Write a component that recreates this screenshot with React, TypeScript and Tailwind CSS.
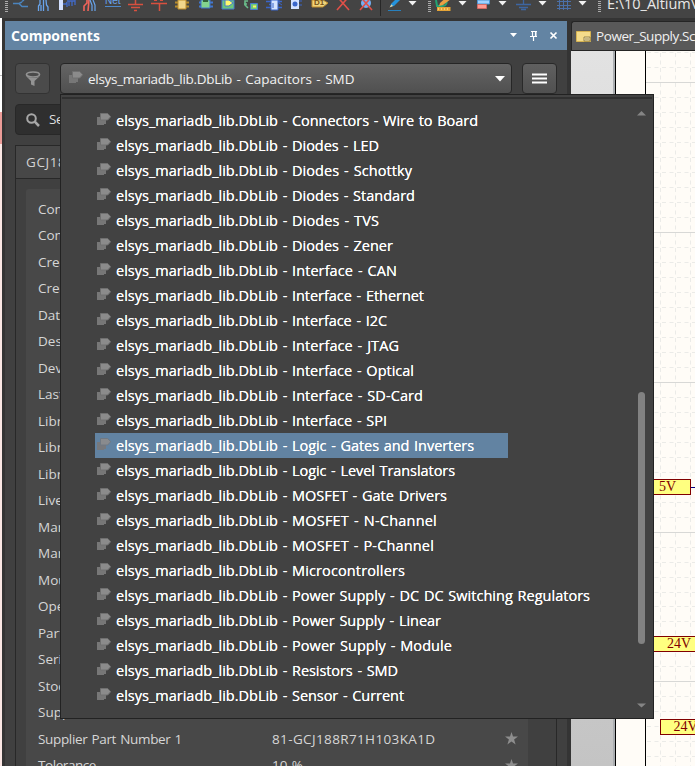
import { useLayoutEffect, useRef } from "react";

const UI = "font-['Open_Sans','Noto_Sans',sans-serif]";

/** Single line of text whose tracking is adjusted so that it spans `width` pixels. */
function Fit({ text, width, className = "" }: { text: string; width: number; className?: string }) {
  const ref = useRef<HTMLSpanElement>(null);
  useLayoutEffect(() => {
    const el = ref.current;
    if (!el) return;
    const fit = () => {
      el.style.letterSpacing = "0px";
      const natural = el.getBoundingClientRect().width;
      el.style.letterSpacing = `${(width - natural) / text.length}px`;
    };
    fit();
    document.fonts.ready.then(fit);
  }, [text, width]);
  return (
    <span ref={ref} className={`inline-block shrink-0 whitespace-pre [word-spacing:1px] ${className}`}>
      {text}
    </span>
  );
}

const libraries: [string, number][] = [
  ["Connectors - Wire to Board", 478],
  ["Diodes - LED", 379],
  ["Diodes - Schottky", 412],
  ["Diodes - Standard", 415],
  ["Diodes - TVS", 379],
  ["Diodes - Zener", 393],
  ["Interface - CAN", 397],
  ["Interface - Ethernet", 424],
  ["Interface - I2C", 387],
  ["Interface - JTAG", 399],
  ["Interface - Optical", 414],
  ["Interface - SD-Card", 423],
  ["Interface - SPI", 387],
  ["Logic - Gates and Inverters", 474],
  ["Logic - Level Translators", 455],
  ["MOSFET - Gate Drivers", 447],
  ["MOSFET - N-Channel", 437],
  ["MOSFET - P-Channel", 434],
  ["Microcontrollers", 405],
  ["Power Supply - DC DC Switching Regulators", 590],
  ["Power Supply - Linear", 441],
  ["Power Supply - Module", 452],
  ["Resistors - SMD", 398],
  ["Sensor - Current", 404],
];

const parameters: [string, string?][] = [
  ["Component Kind"], ["Component Type"], ["Created"], ["Created By"], ["Datasheet"],
  ["Description"], ["Device"], ["Last Modified"], ["Library Name"], ["Library Path"],
  ["Library Ref"], ["Live"], ["Manufacturer"], ["Manufacturer 1"], ["Mounting"],
  ["Operating"], ["Part Number"], ["Series"], ["Stock"], ["Supplier 1"],
  ["Supplier Part Number 1", "81-GCJ188R71H103KA1D"],
  ["Tolerance", "10 %"],
];

function LibIcon({ selected = false }: { selected?: boolean }) {
  return (
    <svg className="shrink-0" width="14" height="12" viewBox="0 0 14 12">
      <path d="M0 4h9v7h-2v1h-7z" fill={selected ? "#77797d" : "#777"} />
      <path d="M3.5.5h7.2l3 3.2-3 3.3h-7.2z" fill={selected ? "#898b8e" : "#8b8b8b"} stroke={selected ? "#707983" : "#707070"} strokeWidth="1" />
    </svg>
  );
}

function Star() {
  return (
    <svg width="13" height="13" viewBox="0 0 13 13">
      <path d="M6.5 0l1.5 4.5H13L9.1 7.4l1.5 5-4.1-3-4.1 3 1.5-5L0 4.5h5z" fill="#8d8d8d" />
    </svg>
  );
}

function Toolbar() {
  const blue = "#4e88ca";
  const red = "#d8503f";
  const carets = [409, 459, 499, 539, 579];
  return (
    <div className="relative h-[18px] w-[695px] shrink-0 bg-[#444]">
      <svg className="block" width="695" height="18" viewBox="0 0 695 18">
        {[5, 428, 598].map((x) => (
          <path key={x} d={`M${x + 1.5} 1v12`} stroke="#aaa" strokeWidth="3" strokeDasharray="1 1" />
        ))}
        {carets.map((x) => (
          <path key={x} d={`M${x - 0.5} 1h8l-4 4.5z`} fill="#f0f0f0" />
        ))}
        <path d="M13 3.5h6l3-1.500M19 3.500l3 3h6M22 1.500l2-1.500" fill="none" stroke="#4b84bd" strokeWidth="1.500" />
        <path d="M40 0v4l-1.500 2v5M43.500 0v11M46 0l.5 5 1.500 2v4M41 5v6" fill="none" stroke="#69a5ed" strokeWidth="1.300" />
        <path d="M59 0h4v10h-4z" fill="#d3e0ff" />
        <path d="M63 4h4M66 4l1-2v5M69 1v5M72 1v5M75 0v5M67 1h8" fill="none" stroke="#416ac8" strokeWidth="1.300" />
        <path d="M87 0v3l-3 3v5M89 0l-1 11" fill="none" stroke="#f0645a" strokeWidth="1.600" />
        <path d="M90 0l2 5v6M93 0l2 5v6" fill="none" stroke="#69a5ed" strokeWidth="1.200" />
        <path d="M105 6.500h16" stroke={blue} />
        <path d="M135.500 0v4M128 4.500h15M131 7.500h9M134 10.500h3" stroke={red} strokeWidth="1.500" />
        <path d="M151 3.500h16M159.500 3v8" stroke={red} strokeWidth="1.500" />
        <path d="M154 .5h3M160 .5h3" stroke={red} />
        <path d="M175 2.500h14M175 6.500h14" stroke="#b58b2d" strokeWidth="2" />
        <path d="M178 0h8v9h-8z" fill="#f1d68b" stroke="#c08d28" />
        <path d="M199 2.500h14M199 6.500h14" stroke="#4177ce" strokeWidth="2" />
        <path d="M201 0h9v8h-9z" fill="#83d48e" stroke="#4177ce" />
        <path d="M203 0h5v2h-5z" fill="#32643b" />
        <path d="M222 0h12v9h-12z" fill="#6cc779" stroke="#477bce" />
        <path d="M225 0h4l4 3-4 3h-4z" fill="#fff96c" stroke="#477bce" />
        <path d="M248 1h-3v4l3 3M244 4h3" fill="none" stroke="#69bc8a" strokeWidth="1.600" />
        <path d="M250.500 3.500h7v6h-7z" fill="#6cc779" stroke="#477bce" />
        <path d="M253 6.500h3" stroke="#ffef62" strokeWidth="2" />
        <path d="M266 1.500h16M266 7.500h16M269 4.500h5" stroke="#3965ca" strokeWidth="1.500" />
        <path d="M271 0h7v10h-7z" fill="#d4e2ff" stroke="#3965ca" />
        <path d="M273 3v5M279 0v3l3 2" fill="none" stroke="#3965ca" />
        <path d="M291 0h8v9h-8z" fill="#d4e2ff" />
        <circle cx="295" cy="4" r="2.500" fill="#3965ca" />
        <path d="M299 1h3M299 5h3" stroke="#3965ca" />
        <path d="M312 0h11l5 3-5 4h-11z" fill="#efd47b" stroke="#be8b2d" />
        <circle cx="366" cy="3" r="5" fill="#74aff4" />
        <path d="M337 10L348.500-3M337.500-3L349 10M360 10L371.500-3M360.500-3L372 10" stroke="#df5048" strokeWidth="1.600" />
        <path d="M380.500 0v16" stroke="#272727" />
        <path d="M390 7l1-3 6-6 3 2-6 6z" fill="#2493dd" />
        <path d="M389.500 7.500l2-3 1.500 1.500z" fill="#e9d6a2" />
        <path d="M388 10.500h13" stroke="#2880bd" />
        <path d="M436 0l1 6h5c5 0 5-4 4-6" fill="none" stroke="#24a373" strokeWidth="2" />
        <path d="M439 6l1-3 8-7 3 3-8 6z" fill="#e9a044" />
        <path d="M437 7h13.500v4H437z" fill="#e5a437" />
        <path d="M438 9h12" stroke="#fff1b4" strokeDasharray="1 2" />
        <path d="M477.500 0h12v4h-12z" fill="#9fd1ff" stroke="#4b92d0" />
        <path d="M477.500 4.500h9v4h-9z" fill="#ff9a92" stroke="#d36b65" />
        <path d="M523.500 0v4M516 4.500h15M519 7.500h9M521 9.500h5" stroke="#3d66a2" strokeWidth="1.300" />
        <path d="M557 1.500h14M557 5.500h14M557 8.500h14M559.500 0v10M563.500 0v10M567.500 0v10" stroke="#4b70a8" />
      </svg>
      <span className="absolute left-[105px] top-[-6px] font-['Liberation_Sans',sans-serif] text-[10px] leading-[14px] text-[#69a5ed]">Net</span>
      <span className="absolute left-[314px] top-[-2px] font-['Liberation_Sans',sans-serif] text-[8px] font-bold leading-[10px] text-[#765318]">D1</span>
      <div className="absolute left-[607px] top-[-6px] text-[14.500px] leading-[20px] text-[#e8e8e8]">
        <Fit text="E:\10_Altium\" width={89} />
      </div>
    </div>
  );
}

function Port({ x, y, w, tx, label }: { x: number; y: number; w: number; tx: number; label: string }) {
  return (
    <g>
      <rect x={x + 0.5} y={y + 0.5} width={w} height="15" fill="#ffff80" stroke="#800000" />
      <text x={tx} y={y + 12} fill="#800000" fontFamily="Liberation Serif, serif" fontSize="14">{label}</text>
    </g>
  );
}

function Schematic() {
  const rows = Array.from({ length: 48 }, (_, i) => 52.5 + i * 15);
  return (
    <div className="relative h-[715px] w-[124px] overflow-hidden bg-[#fffcf7]">
      <svg className="block" width="124" height="715" viewBox="571 51 124 715">
        <defs>
          <linearGradient id="desk" x1="0" y1="0" x2="0" y2="1">
            <stop offset="0" stopColor="#e2e2e2" />
            <stop offset="1" stopColor="#c4c4c4" />
          </linearGradient>
        </defs>
        <rect x="571" y="51" width="44" height="715" fill="url(#desk)" />
        <path d="M614 51v715" stroke="#aaadb0" strokeWidth="2" />
        <path d="M615.500 51v715M645.500 51v715" stroke="#000" />
        {rows.map((y) =>
          (y - 82.5) % 150 === 0 ? (
            <path key={y} d={`M646 ${y - (y > 600 ? 1 : 0)}h49`} stroke="#d8d8d6" />
          ) : (
            <path key={y} d={`M647 ${y - (y > 600 ? 1 : 0)}h48`} stroke="#ebebe8" strokeDasharray="4 3.500" />
          ),
        )}
        <path d="M660.500 53v713M675.500 53v713M690.500 53v713" stroke="#ebebe8" strokeDasharray="4 3.500" />
        <Port x={640} y={479} w={50} tx={659} label="5V" />
        <path d="M691 487.500h4" stroke="#000080" />
        <Port x={640} y={636} w={70} tx={667} label="24V" />
        <Port x={660} y={719} w={50} tx={673.5} label="24V" />
      </svg>
    </div>
  );
}

function LibraryMenu() {
  return (
    <div className="absolute left-[60px] top-[94px] flex h-[625px] w-[594px] border border-[#222] bg-[#424242]">
      <div className="absolute left-px top-[2px] h-[2px] w-[590px] bg-[#303030]" />
      <div className="flex flex-1 flex-col pl-[34px] pt-[13px]">
        {libraries.map(([name, end], i) => {
          const selected = i === 13;
          return (
            <div
              key={name}
              className={`flex h-[25px] w-[413px] shrink-0 items-center pl-[2px] text-[14.500px] leading-[25px] text-white ${selected ? "bg-[#6283a2]" : ""}`}
            >
              <span className="flex w-[19px] shrink-0 pb-[3px]">
                <LibIcon selected={selected} />
              </span>
              <span className="flex shrink-0 [text-shadow:0_0_0.500px_#fff]">
                <Fit text="elsys_mariadb_lib.DbLib" width={162} />
                <Fit text=" - " width={14} />
                <Fit text={name} width={end - 292} />
              </span>
            </div>
          );
        })}
      </div>
      <div className="flex w-[15px] flex-col items-center">
        <svg className="absolute right-[7px] top-[16px]" width="9" height="5" viewBox="0 0 9 5"><path d="M0 4.500l4.500-4.500L9 4.500z" fill="#858585" /></svg>
        <svg className="absolute bottom-[10px] right-[7px]" width="9" height="5" viewBox="0 0 9 5"><path d="M0 0.500l4.500 4L9 0.500z" fill="#858585" /></svg>
        <div className="absolute right-[8px] top-[297px] h-[252px] w-[7px] rounded-full bg-[#828282]" />
      </div>
    </div>
  );
}

function ComponentsPanel() {
  return (
    <div className="flex h-[745px] w-[562px] flex-col overflow-hidden bg-[#404040]">
      <div className="flex h-[29px] shrink-0 items-center bg-[#6384a3] pl-[6px]">
        <div className="text-[14px] font-bold leading-[29px] text-white"><Fit text="Components" width={89} /></div>
        <svg className="ml-auto mr-[9px]" width="48" height="13" viewBox="0 0 48 13">
          <path d="M0 4h7L3.500 8z" fill="#fff" />
          <path d="M21 2.500h6M22.500 2v5M25.500 2v5M20 7.500h7M23.500 8v4" stroke="#fff" strokeWidth="1.200" />
          <path d="M25 2h1.500v5H25z" fill="#fff" />
          <path d="M40.500 3.500l6 6M46.500 3.500l-6 6" stroke="#fff" strokeWidth="1.700" />
        </svg>
      </div>
      <div className="flex shrink-0 pl-[10px] pt-[13px]">
        <div className="flex h-[31px] w-[35px] items-center justify-center rounded-[4px] border border-[#333] bg-[#4b4b4b]">
          <svg width="16" height="16" viewBox="0 0 16 16">
            <ellipse cx="8" cy="3.5" rx="6.500" ry="2.500" fill="none" stroke="#939393" strokeWidth="1.700" />
            <path d="M1 5l5 5v3.500l3.500 1.500v-5l5.500-5C12 7.500 4 7.500 1 5z" fill="#939393" />
          </svg>
        </div>
        <div className="ml-[10px] flex h-[31px] w-[452px] items-center rounded-[4px] border border-[#262626] bg-linear-to-b from-[#646464] to-[#505050] pl-[8px] pr-[6px] text-[13.500px] leading-[29px] text-[#f2f2f2]">
          <span className="flex w-[19px] pb-[3px]"><LibIcon /></span>
          <span className="flex pt-px">
            <Fit text="elsys_mariadb_lib.DbLib" width={144} />
            <Fit text=" - Capacitors - SMD" width={122.5} />
          </span>
          <svg className="ml-auto" width="10" height="6" viewBox="0 0 10 6"><path d="M0 0h10L5 5.500z" fill="#fff" /></svg>
        </div>
        <div className="ml-[10px] flex h-[31px] w-[35px] items-center justify-center rounded-[4px] border border-[#292929] bg-linear-to-b from-[#606060] to-[#505050]">
          <svg width="15" height="11" viewBox="0 0 15 11"><path d="M0 1.500h15M0 5.500h15M0 9.500h15" stroke="#fff" strokeWidth="2" /></svg>
        </div>
      </div>
      <div className="ml-[10px] mt-[10px] flex h-[31px] w-[542px] shrink-0 items-center rounded-[4px] border border-[#282828] bg-[#2f2f2f] pl-[10px] text-[13.500px] text-[#dedede]">
        <svg width="14" height="14" viewBox="0 0 14 14">
          <circle cx="5.500" cy="5.500" r="4.300" fill="none" stroke="#a8a8a8" strokeWidth="2" />
          <path d="M8.700 8.700l4.300 4.300" stroke="#a8a8a8" strokeWidth="2.500" />
        </svg>
        <span className="ml-[9px]"><Fit text="Search" width={41} /></span>
      </div>
      <div className="ml-[10px] mt-[10px] flex h-[640px] w-[542px] shrink-0 flex-col border border-[#282828]">
        <div className="flex h-[33px] shrink-0 items-center border-b border-[#282828] bg-[#474747] pl-[10px] text-[13.500px] text-[#d2d2d2]">
          <Fit text="GCJ188R71H103KA1D" width={146} />
        </div>
        <div className="ml-[10px] mt-[10px] w-[502px] rounded-t-[3px] bg-[#484848] pt-[6.500px]">
          {parameters.map(([label, value]) => (
            <div key={label} className="flex h-[26.500px] items-center pl-[12px] text-[13.500px] leading-[26px] text-[#d6d6d6]">
              <span className="w-[234px]">
                {label === "Supplier Part Number 1" ? (
                  <Fit text={label} width={144} />
                ) : label === "Tolerance" ? (
                  <Fit text={label} width={58} />
                ) : (
                  <span>{label}</span>
                )}
              </span>
              {value && (
                <>
                  <Fit text={value} width={value.length > 6 ? 163.5 : 31} />
                  <span className="ml-auto mr-[10px]"><Star /></span>
                </>
              )}
            </div>
          ))}
        </div>
      </div>
    </div>
  );
}

export default function App() {
  return (
    <div className={`relative flex h-[766px] w-[695px] flex-col overflow-hidden bg-[#343434] ${UI}`}>
      <Toolbar />
      <div className="flex h-[748px] shrink-0">
        <div className="flex w-[5px] flex-col border-r-[3px] border-[#343434]">
          <div className="h-[57px] bg-white" />
          <div className="h-[37px] border-t border-[#bbb] bg-white" />
          <div className="h-[32px] bg-[#ec9c98]" />
          <div className="flex-1 bg-[#fbe7e4]" />
        </div>
        <div className="pt-[3px]"><ComponentsPanel /></div>
        <div className="ml-[4px] flex w-[124px] flex-col pt-[3px]">
          <div className="flex h-[30px] shrink-0 items-center rounded-tl-[3px] border border-r-0 border-[#252525] bg-[#595959] pl-[4px] text-[13.500px] text-[#f0f0f0]">
            <svg className="shrink-0" width="15" height="11" viewBox="0 0 15 11">
              <path d="M.5.5h14v10H.5z" fill="#f4dc8b" stroke="#d7b452" />
              <path d="M8 6h6v4H8zM9 8h4" fill="#f7e8b2" stroke="#80703a" strokeWidth=".8" />
            </svg>
            <span className="ml-[5px]"><Fit text="Power_Supply.SchDoc" width={130} /></span>
          </div>
          <Schematic />
        </div>
      </div>
      <LibraryMenu />
    </div>
  );
}
